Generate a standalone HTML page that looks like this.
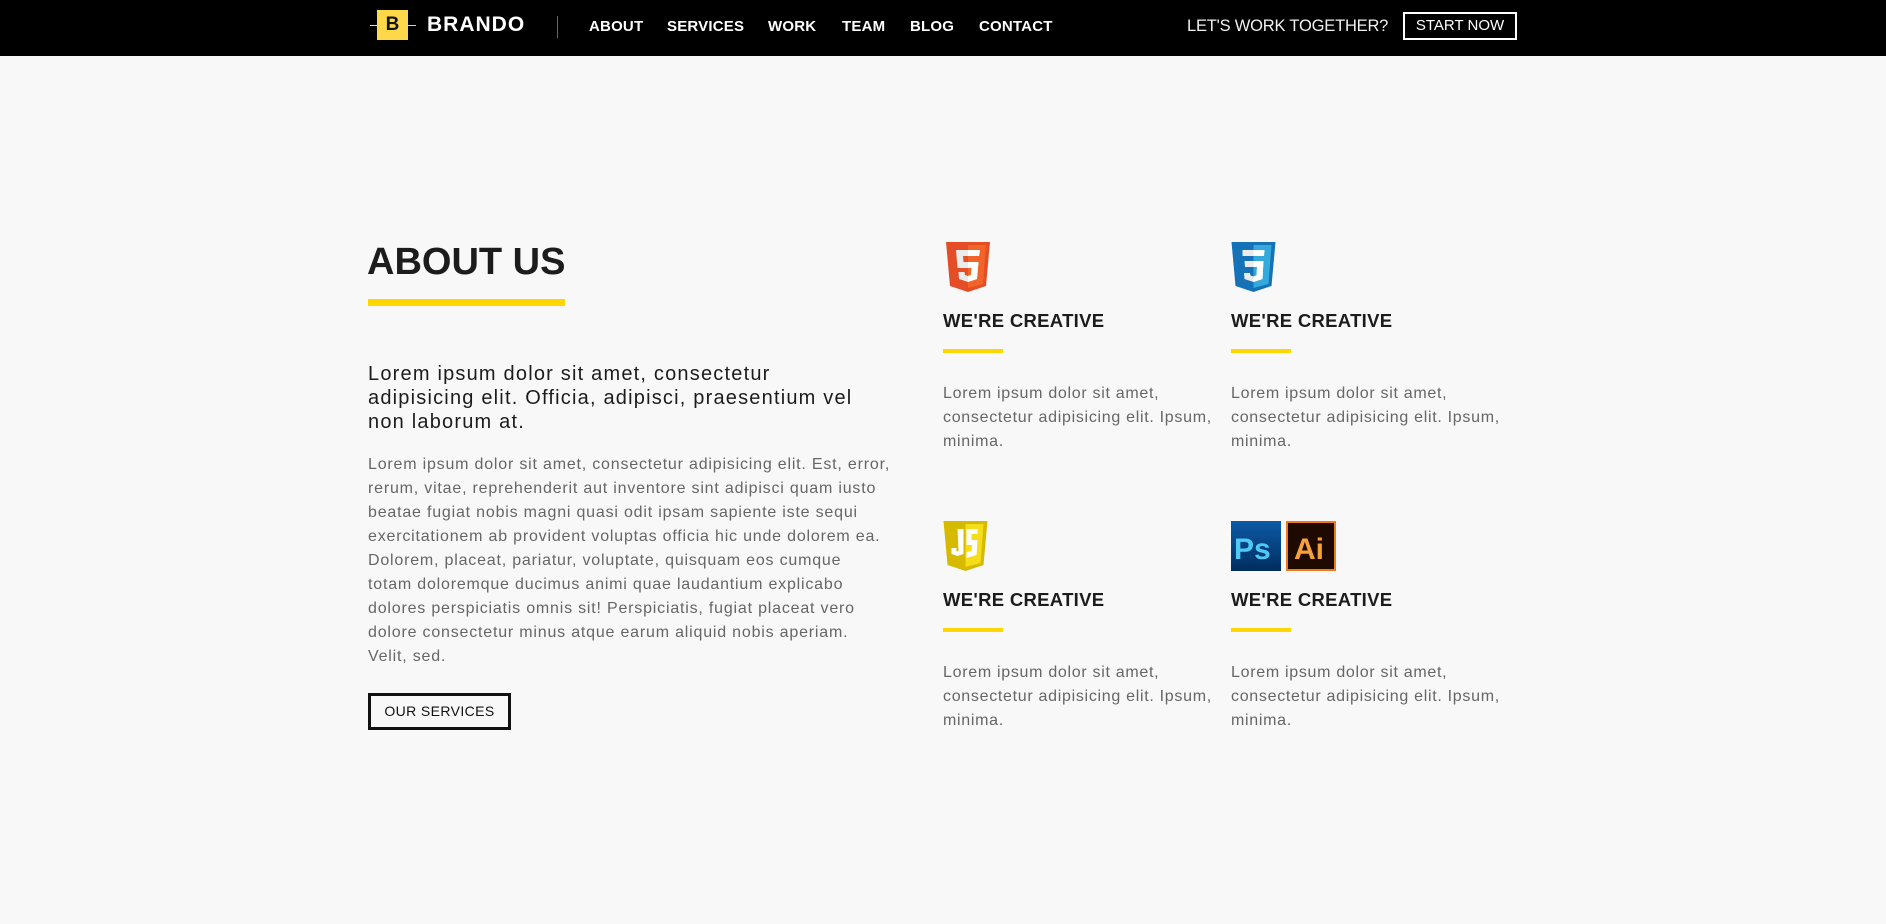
<!DOCTYPE html>
<html><head><meta charset="utf-8"><style>
*{margin:0;padding:0;box-sizing:border-box}
body{width:1886px;height:924px;background:#f8f8f8;font-family:"Liberation Sans",sans-serif;position:relative;overflow:hidden;color:#222}
.nav{position:absolute;left:0;top:0;width:1886px;height:56px;background:#000}
.a{position:absolute;white-space:nowrap}
.nl{color:#fff;font-size:15px;font-weight:bold;top:18px;letter-spacing:0.2px}
.h4{font-size:18.5px;font-weight:bold;color:#1c1c1c;letter-spacing:0.3px}
.yl{position:absolute;background:#ffd600;height:4px;width:60px}
.t{font-size:16px;color:#666;line-height:24px;letter-spacing:0.7px}
</style></head><body>
<div class="nav">
  <div class="a" style="left:370px;top:25px;width:46px;height:1px;background:#ffd84a"></div>
  <div class="a" style="left:377px;top:10px;width:31px;height:30px;background:#ffd84a;color:#111;font-weight:bold;font-size:19px;text-align:center;line-height:30px">B</div>
  <div class="a" style="left:427px;top:13px;color:#fff;font-weight:bold;font-size:21px;letter-spacing:1px">BRANDO</div>
  <div class="a" style="left:557px;top:16px;width:1px;height:22px;background:#666"></div>
  <div class="a nl" style="left:589px">ABOUT</div>
  <div class="a nl" style="left:667px">SERVICES</div>
  <div class="a nl" style="left:768px">WORK</div>
  <div class="a nl" style="left:842px">TEAM</div>
  <div class="a nl" style="left:910px">BLOG</div>
  <div class="a nl" style="left:979px">CONTACT</div>
  <div class="a" style="left:1187px;top:17px;color:#f0f0f0;font-size:16.5px;letter-spacing:-0.2px">LET'S WORK TOGETHER?</div>
  <div class="a" style="left:1403px;top:12px;width:114px;height:28px;border:2px solid #fff;color:#fff;font-size:15px;text-align:center;line-height:24px">START NOW</div>
</div>

<div class="a" style="left:367px;top:241px;font-size:38px;font-weight:bold;color:#1c1c1c;letter-spacing:0px">ABOUT US</div>
<div class="yl" style="left:368px;top:299px;width:197px;height:7px"></div>
<div class="a" style="left:368px;top:362px;font-size:20px;line-height:24px;color:#1c1c1c;letter-spacing:1.2px">Lorem ipsum dolor sit amet, consectetur<br>adipisicing elit. Officia, adipisci, praesentium vel<br>non laborum at.</div>
<div class="a t" style="left:368px;top:453px;letter-spacing:0.8px">Lorem ipsum dolor sit amet, consectetur adipisicing elit. Est, error,<br>rerum, vitae, reprehenderit aut inventore sint adipisci quam iusto<br>beatae fugiat nobis magni quasi odit ipsam sapiente iste sequi<br>exercitationem ab provident voluptas officia hic unde dolorem ea.<br>Dolorem, placeat, pariatur, voluptate, quisquam eos cumque<br>totam doloremque ducimus animi quae laudantium explicabo<br>dolores perspiciatis omnis sit! Perspiciatis, fugiat placeat vero<br>dolore consectetur minus atque earum aliquid nobis aperiam.<br>Velit, sed.</div>
<div class="a" style="left:368px;top:693px;width:143px;height:37px;border:3px solid #111;font-size:14px;text-align:center;line-height:31px;color:#111;letter-spacing:0.4px">OUR SERVICES</div>

<!-- HTML5 -->
<svg class="a" style="left:946px;top:242px" width="44" height="50" viewBox="0 0 44 50"><path d="M0 0H44L40 44 22 50 4 44Z" fill="#e44d26"/><path d="M22 3H40L37 42 22 46Z" fill="#f16529"/><path d="M10 8H34L33 14H17L17.5 20H32.5L31 37 22 40 13 37 12.5 30H18.5L19 33 22 34 25 33 25.5 26H11.5Z" fill="#ebebeb"/><path d="M22 8H34L33 14H22ZM22 20H32.5L31 37 22 40V34L25 33 25.5 26H22Z" fill="#fff"/></svg>
<!-- CSS3 -->
<svg class="a" style="left:1231px;top:242px" width="45" height="50" viewBox="0 0 44 50"><path d="M0 0H44L40 44 22 50 4 44Z" fill="#1572b6"/><path d="M22 3H40L37 42 22 46Z" fill="#33a9dc"/><path d="M11 8H33L32.5 14H11ZM13 19H32L31 37 22 40 13 37 12.5 31H18.5L19 33.5 22 34.5 25 33.5 25.5 25H13.5Z" fill="#ebebeb"/><path d="M22 8H33L32.5 14H22ZM22 19H32L31 37 22 40V34.5L25 33.5 25.5 25H22Z" fill="#fff"/></svg>
<!-- JS -->
<svg class="a" style="left:943px;top:521px" width="45" height="50" viewBox="0 0 44 50"><path d="M0 0H44L40 44 22 50 4 44Z" fill="#d6ba00"/><path d="M22 3H40L37 42 22 46Z" fill="#f5de19"/><path d="M14 8H20V33L14 35 8 33V27H13V30L14 30.5 15 30Z" fill="#fff"/><path d="M23 8H34V13H28V19H34L33 34 23 37V31L28 30 28.5 24H23Z" fill="#fff"/></svg>
<!-- PS -->
<svg class="a" style="left:1231px;top:521px" width="50" height="50" viewBox="0 0 50 50"><defs><linearGradient id="g" x1="0" y1="0" x2="0" y2="1"><stop offset="0" stop-color="#0d5aa7"/><stop offset="1" stop-color="#002d5e"/></linearGradient></defs><rect width="50" height="50" fill="url(#g)"/><text x="3" y="38" font-family="Liberation Sans" font-weight="bold" font-size="30" fill="#4fcaf6">Ps</text></svg>
<!-- AI -->
<svg class="a" style="left:1286px;top:521px" width="50" height="50" viewBox="0 0 50 50"><rect x="1" y="1" width="48" height="48" fill="#1e0a00" stroke="#f07a1a" stroke-width="2"/><text x="8" y="38" font-family="Liberation Sans" font-weight="bold" font-size="30" fill="#f7a239">Ai</text></svg>

<div class="a h4" style="left:943px;top:310px">WE'RE CREATIVE</div>
<div class="yl" style="left:943px;top:349px"></div>
<div class="a t" style="left:943px;top:382px">Lorem ipsum dolor sit amet,<br>consectetur adipisicing elit. Ipsum,<br>minima.</div>

<div class="a h4" style="left:1231px;top:310px">WE'RE CREATIVE</div>
<div class="yl" style="left:1231px;top:349px"></div>
<div class="a t" style="left:1231px;top:382px">Lorem ipsum dolor sit amet,<br>consectetur adipisicing elit. Ipsum,<br>minima.</div>

<div class="a h4" style="left:943px;top:589px">WE'RE CREATIVE</div>
<div class="yl" style="left:943px;top:628px"></div>
<div class="a t" style="left:943px;top:661px">Lorem ipsum dolor sit amet,<br>consectetur adipisicing elit. Ipsum,<br>minima.</div>

<div class="a h4" style="left:1231px;top:589px">WE'RE CREATIVE</div>
<div class="yl" style="left:1231px;top:628px"></div>
<div class="a t" style="left:1231px;top:661px">Lorem ipsum dolor sit amet,<br>consectetur adipisicing elit. Ipsum,<br>minima.</div>
</body></html>
